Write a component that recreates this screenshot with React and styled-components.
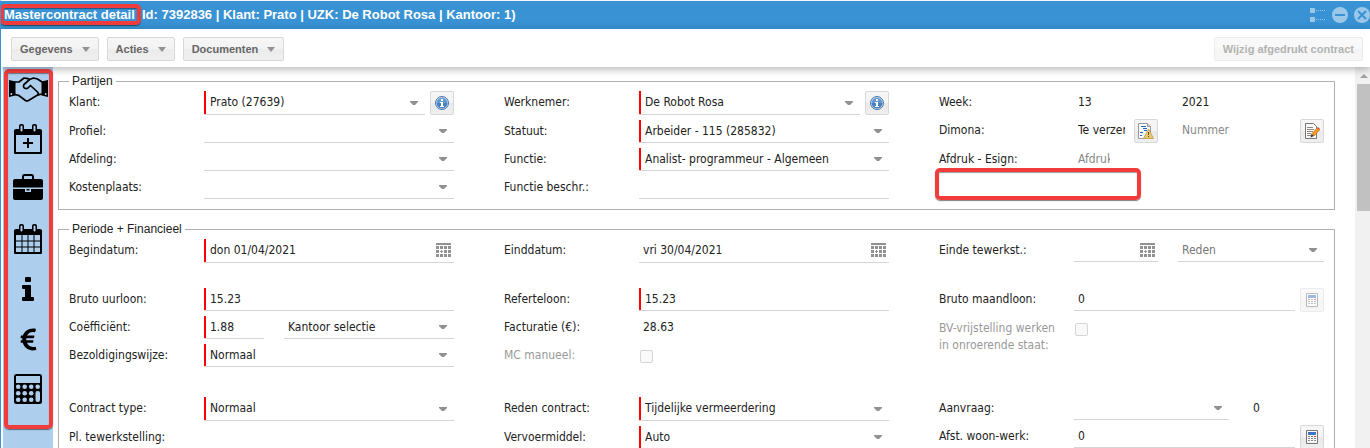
import React, { useId } from "react";
import styled, { createGlobalStyle, css } from "styled-components";
import { FaEuroSign } from "react-icons/fa";

const GlobalStyle = createGlobalStyle`
    * {
        box-sizing: border-box;
    }

    body {
        margin: 0;
        background: #fff;
        color: #222;
        font-family: "DejaVu Sans Condensed", "DejaVu Sans", sans-serif;
        font-size: 12px;
    }

    input, select, button {
        font: inherit;
        color: inherit;
        margin: 0;
    }
`;

const Window = styled.div`
    display: flex;
    flex-direction: column;
    height: 100vh;
    overflow: hidden;
    border-top: 1px solid #f5f5f5;
    border-left: 1px solid #3892d3;
`;

/* Rood kader rond een onderdeel */
const Highlight = styled.span`
    position: absolute;
    inset: ${({ $inset }) => $inset};
    border: 4px solid #f23c3c;
    border-radius: 5px;
    box-shadow: 0 1px 1px rgba(0, 0, 0, 0.5), inset 0 1px 1px rgba(0, 0, 0, 0.4);
    pointer-events: none;
`;

const TitleBar = styled.header`
    display: flex;
    align-items: center;
    justify-content: space-between;
    flex-shrink: 0;
    height: 28px;
    padding-left: 3px;
    background: #3892d3;
`;

const Title = styled.h1`
    margin: 0;
    color: #fff;
    font: bold 13px/16px "Liberation Sans", Arial, sans-serif;
    white-space: pre;
`;

const Marked = styled.span`
    position: relative;
`;

const Tools = styled.div`
    display: flex;
    gap: 6px;
`;

const ToolButton = styled.button`
    display: flex;
    padding: 0;
    border: 0;
    background: none;
`;

const Toolbar = styled.div`
    display: flex;
    align-items: center;
    flex-shrink: 0;
    gap: 8px;
    height: 38px;
    padding: 2px 7px 0 10px;
    background: #fff;
    box-shadow: 0 2px 8px rgba(0, 0, 0, 0.3);
    position: relative;
    z-index: 1;
`;

const MenuButton = styled.button`
    display: flex;
    align-items: center;
    gap: 9px;
    height: 24px;
    padding: 0 8px;
    border: 1px solid #d8d8d8;
    border-radius: 2px;
    background: linear-gradient(#f6f6f6, #f3f3f3 50%, #ececec 50%, #efefef);
    color: #666;
    font: bold 11px/14px "Liberation Sans", Arial, sans-serif;

    &:disabled {
        opacity: 0.5;
    }
`;

const Spacer = styled.div`
    flex: 1;
`;

const Body = styled.div`
    display: flex;
    flex: 1;
    min-height: 0;
`;

const Sidebar = styled.aside`
    flex: 0 0 50px;
    margin-left: 2px;
    background: #adceed;
`;

const SideNav = styled.nav`
    position: relative;
    display: flex;
    flex-direction: column;
    gap: 6px;
    padding-bottom: 18px;
`;

const SideLink = styled.a`
    display: flex;
    align-items: center;
    justify-content: center;
    height: 44px;
    color: #000;
`;

const Content = styled.main`
    display: flex;
    flex-direction: column;
    flex: 1;
    gap: 12px;
    min-width: 0;
    padding: 7px 20px 0 5px;
    overflow: hidden;
`;

const Scrollbar = styled.div`
    flex: 0 0 15px;
    display: flex;
    flex-direction: column;
    align-items: center;
    padding: 7px 0 0 2px;
    gap: 6px;
    background: #f1f1f1;
`;

const Thumb = styled.div`
    width: 100%;
    height: 34%;
    background: #c1c1c1;
`;

const Fieldset = styled.fieldset`
    flex-shrink: 0;
    min-width: 0;
    margin: 0;
    padding: 3px 10px 10px;
    border: 1px solid #b0b0b0;
`;

const Legend = styled.legend`
    padding: 0 3px;
    font: 12px/14px "Liberation Sans", Arial, sans-serif;
`;

const Group = styled.div`
    display: grid;
    grid-template-columns: repeat(3, minmax(0, 1fr));
    column-gap: 50px;
    margin-bottom: ${({ $space = 0 }) => $space}px;
`;

const Column = styled.div`
    display: flex;
    flex-direction: column;
    gap: 5px;
`;

const Row = styled.div`
    position: relative;
    display: grid;
    grid-template-columns: 135px minmax(0, 1fr);
    align-items: start;
    min-height: 23px;
`;

const Label = styled.label`
    line-height: ${({ $multi }) => ($multi ? 17 : 23)}px;
    padding-top: ${({ $multi }) => ($multi ? 3 : 0)}px;
    color: ${({ $muted }) => ($muted ? "#999" : "inherit")};
`;

const Controls = styled.div`
    display: flex;
    align-items: flex-start;
    gap: ${({ $gap = 5 }) => $gap}px;
`;

const Field = styled.div`
    position: relative;
    display: flex;
    flex: ${({ $width }) => ($width ? `0 0 ${$width}px` : "1 1 0")};
    min-width: 0;
    margin-left: ${({ $indent = 0 }) => $indent}px;
`;

const control = css`
    width: 100%;
    height: ${({ $tall }) => ($tall ? 24 : 23)}px;
    padding: 0 4px ${({ $tall }) => ($tall ? 2 : 0)}px;
    border: 0;
    border-bottom: 1px solid ${({ $plain }) => ($plain ? "transparent" : "#d5d5d5")};
    border-radius: 0;
    outline: 0;
    background: transparent;

    ${({ $required }) => $required && css`
        padding-left: 6px;
        box-shadow: inset 2px 0 #f00;
    `}
`;

const Input = styled.input`
    ${control}

    &::placeholder {
        color: #888;
        opacity: 1;
    }
`;

const Select = styled.select`
    ${control}
    appearance: none;
    color: ${({ $muted }) => ($muted ? "#777" : "inherit")};
`;

const Trigger = styled.span`
    position: absolute;
    top: 0;
    bottom: 1px;
    right: ${({ $right = 7 }) => $right}px;
    display: flex;
    align-items: center;
    pointer-events: none;
`;

const Checkbox = styled.input`
    appearance: none;
    width: 13px;
    height: 13px;
    margin: 6px 1px 0;
    border: 1px solid #d5d5d5;
    border-radius: 2px;
    background: #f9f9f9;
`;

const IconButton = styled.button`
    display: flex;
    align-items: center;
    justify-content: center;
    flex: 0 0 24px;
    height: 24px;
    padding: 0;
    border: 1px solid #d8d8d8;
    border-radius: 2px;
    background: linear-gradient(#f6f6f6, #f3f3f3 50%, #e9e9e9 50%, #efefef);

    &:disabled {
        opacity: 0.5;
    }
`;

const Caret = () => (
    <svg width="8" height="4" viewBox="0 0 8 4" fill="#919191">
        <path d="M0 0h8v1L5 4H3L0 1z" />
    </svg>
);

const MenuCaret = () => (
    <svg width="8" height="5" viewBox="0 0 8 5" fill="#929292">
        <path d="M0 0h8L4 5z" />
    </svg>
);

const ScrollArrow = () => (
    <svg width="8" height="4" viewBox="0 0 8 4" fill="#a3a3a3">
        <path d="M4 0l4 4H0z" />
    </svg>
);

const DateIcon = () => (
    <svg width="15" height="15" viewBox="0 0 15 15" fill="#919191" shapeRendering="crispEdges">
        <path d="M0 0h15v2H0zM0 3h3v3H0zM4 3h3v3H4zM8 3h3v3H8zM12 3h3v3h-3zM0 7h3v3H0zM5 7h1v1h1v1H6v1H5V9H4V8h1zM8 7h3v3H8zM12 7h3v3h-3zM0 11h3v3H0zM4 11h3v3H4zM8 11h3v3H8zM12 11h3v3h-3z" />
    </svg>
);

const InfoBadge = () => (
    <svg width="14" height="14" viewBox="0 0 14 14">
        <circle cx="7" cy="7" r="6.5" fill="#c3d8ef" stroke="#4a77ad" />
        <circle cx="7" cy="7" r="5.3" fill="#6499d0" />
        <path d="M1.7 7a5.3 5.3 0 0 0 10.6 0z" fill="#4a80bd" />
        <path d="M6 3h2v2H6zM5 6h3v4h1v1H5v-1h1V7H5z" fill="#fff" />
    </svg>
);

const WarningDocIcon = () => (
    <svg width="16" height="16" viewBox="0 0 16 16">
        <path d="M.5.5h9l3 3v12H.5z" fill="#fafafa" stroke="#999" />
        <path d="M9.5.5v3h3" fill="#ddd" stroke="#999" />
        <path d="M3 3.5h5M5 5.500h4M6 7.500h3M2 9.500h3M2 12.500h2" stroke="#1a66d0" />
        <path d="M10.500 6l5 9.500h-10z" fill="#e3c878" stroke="#c9a654" />
        <path d="M10 9h1v3h-1zM10 13h1v1h-1z" fill="#6b4d12" />
    </svg>
);

const EditDocIcon = () => (
    <svg width="16" height="16" viewBox="0 0 16 16">
        <path d="M1.500.5h8l3 3v12h-11z" fill="#fafafa" stroke="#777" />
        <path d="M3 4.500h6M3 6.500h7M3 8.500h6M3 10.500h4M3 12.500h4" stroke="#888" />
        <path d="M13 5l2.500 2-5.500 6-2.500-2z" fill="#f59a23" stroke="#c8660a" strokeWidth=".6" />
        <path d="M13 5l1-1 2 2-.5 1z" fill="#d9482b" />
        <path d="M7.500 11l2.500 2-3.500 1.500z" fill="#333" />
    </svg>
);

const SmallCalcIcon = () => (
    <svg width="12" height="14" viewBox="0 0 12 14">
        <path d="M.5.5h11v13H.5z" fill="#fafafa" stroke="#777" />
        <path d="M2 2h8v3H2z" fill="#3e74c4" />
        <path d="M2 6h2v1H2zM5 6h2v1H5zM2 8h2v1H2zM5 8h2v1H5zM8 8h2v1H8zM2 10h2v1H2zM5 10h2v1H5zM8 10h2v1H8z" fill="#888" />
        <path d="M8 6h2v1H8z" fill="#e33" />
    </svg>
);

const HandshakeIcon = () => (
    <svg width="39" height="25" viewBox="0 0 39 25">
        <path d="M0 3l6.500 1.500v14L0 20zM39 3l-6.500 1.500v14L39 20z" />
        <circle cx="2.300" cy="17" r="1" fill="#adceed" />
        <circle cx="36.700" cy="17" r="1" fill="#adceed" />
        <g fill="none" stroke="#000" strokeWidth="1.700" strokeLinejoin="round" strokeLinecap="round">
            <path d="M6 5h4l5-4 4 .7 1.500.8L24.500 1l4 1L33 5" />
            <path d="M6 17.500l3.500.8 7 5.200q1.500.8 3 0l9.500-5.700 4-.8" />
            <path d="M20.500 2.500l-5.500 5q-1.500 3 1.500 4 2 .3 3.500-1.500l1.500-1.500 7 6.500q1.500 2 .5 3" />
        </g>
    </svg>
);

const CalendarIcon = ({ plus }) => (
    <svg width="28" height="30" viewBox="0 0 28 30">
        <path d="M1 7h26v22H1z" fill="none" stroke="#000" strokeWidth="2" strokeLinejoin="round" />
        <path d="M0 7q0-2 2-2h24q2 0 2 2v4H0z" />
        <rect x="5" width="5" height="9" rx="2" />
        <rect x="18" width="5" height="9" rx="2" />
        <path d="M7.500 2.500v4M20.500 2.500v4" stroke="#adceed" strokeWidth="2" strokeLinecap="round" />
        {plus
            ? <path d="M14 14v10M9 19h10" stroke="#000" strokeWidth="2" />
            : <path d="M8 11v18M14 11v18M20 11v18M1 17h26M1 23h26" stroke="#000" />}
    </svg>
);

const BriefcaseIcon = () => (
    <svg width="30" height="30" viewBox="0 0 30 30">
        <path d="M10 6V2.500Q10 1 11.500 1h7Q20 1 20 2.500V6" fill="none" stroke="#000" strokeWidth="2" />
        <path d="M2 5h26q2 0 2 2v6.500H0V7q0-2 2-2zM0 15h12v3h6v-3h12v9q0 2-2 2H2q-2 0-2-2zM13.500 15h3v1.500h-3z" />
    </svg>
);

const InfoIcon = () => (
    <svg width="12" height="24" viewBox="0 0 12 24">
        <path d="M4 0h4q1 0 1 1v3q0 1-1 1H4q-1 0-1-1V1q0-1 1-1zM1 8h7q1 0 1 1v11h2q1 0 1 1v2q0 1-1 1H1q-1 0-1-1v-2q0-1 1-1h2v-8H1q-1 0-1-1V9q0-1 1-1z" />
    </svg>
);

const CalculatorIcon = () => (
    <svg width="28" height="30" viewBox="0 0 28 30">
        <rect width="28" height="30" rx="2.500" />
        <path d="M2 2h24v7H2z" fill="#adceed" />
        <g fill="#adceed">
            {[12.800, 19.300, 25.800].map((y) => [4.200, 10.700, 17.200].map((x) => (
                <circle key={`${x}-${y}`} cx={x} cy={y} r="2.300" />
            )))}
            <circle cx="23.700" cy="12.800" r="2.300" />
            <rect x="21.500" y="17" width="4.500" height="11" rx="2" />
        </g>
    </svg>
);

const ListIcon = () => (
    <svg width="16" height="16" viewBox="0 0 16 16" fill="#9bc8e9">
        <path d="M0 1h5v5H0zM0 10h5v5H0z" />
        <path d="M6 3.500h10M6 12.500h10" stroke="#9bc8e9" strokeDasharray="1 1" />
    </svg>
);

const CircleIcon = ({ d }) => (
    <svg width="16" height="16" viewBox="0 0 16 16">
        <circle cx="8" cy="8" r="8" fill="#9bc8e9" />
        <path d={d} stroke="#3892d3" strokeWidth="2" />
    </svg>
);

function TextField({ width, indent, date, ...props }) {
    return (
        <Field $width={width} $indent={indent}>
            <Input {...props} />
            {date && <Trigger $right={3}><DateIcon /></Trigger>}
        </Field>
    );
}

function SelectField({ width, value = "", ...props }) {
    return (
        <Field $width={width}>
            <Select defaultValue={value} {...props}>
                <option>{value}</option>
            </Select>
            <Trigger><Caret /></Trigger>
        </Field>
    );
}

function FormRow({ label, muted, multi, gap, highlight, children }) {
    const id = useId();
    const [first, ...rest] = React.Children.toArray(children);
    return (
        <Row>
            <Label htmlFor={id} $muted={muted} $multi={multi}>{label}</Label>
            <Controls $gap={gap}>
                {React.cloneElement(first, { id })}
                {rest}
            </Controls>
            {highlight && <Highlight $inset="20px 183px -29px -4px" />}
        </Row>
    );
}

function Partijen() {
    return (
        <Fieldset>
            <Legend>Partijen</Legend>
            <Group>
                <Column>
                    <FormRow label="Klant:">
                        <SelectField value="Prato (27639)" $required $tall />
                        <IconButton aria-label="Info klant"><InfoBadge /></IconButton>
                    </FormRow>
                    <FormRow label="Profiel:"><SelectField /></FormRow>
                    <FormRow label="Afdeling:"><SelectField /></FormRow>
                    <FormRow label="Kostenplaats:"><SelectField /></FormRow>
                </Column>
                <Column>
                    <FormRow label="Werknemer:">
                        <SelectField value="De Robot Rosa" $required $tall />
                        <IconButton aria-label="Info werknemer"><InfoBadge /></IconButton>
                    </FormRow>
                    <FormRow label="Statuut:"><SelectField value="Arbeider - 115 (285832)" $required /></FormRow>
                    <FormRow label="Functie:"><SelectField value="Analist- programmeur - Algemeen" $required /></FormRow>
                    <FormRow label="Functie beschr.:"><TextField /></FormRow>
                </Column>
                <Column>
                    <FormRow label="Week:" gap={20}>
                        <TextField width={84} defaultValue="13" $plain />
                        <TextField defaultValue="2021" aria-label="Jaar" $plain />
                    </FormRow>
                    <FormRow label="Dimona:">
                        <TextField width={55} defaultValue="Te verzenden" $plain />
                        <IconButton aria-label="Dimona status"><WarningDocIcon /></IconButton>
                        <TextField indent={15} placeholder="Nummer" aria-label="Nummer" $plain />
                        <IconButton aria-label="Dimona bewerken"><EditDocIcon /></IconButton>
                    </FormRow>
                    <FormRow label="Afdruk - Esign:" highlight>
                        <TextField width={40} placeholder="Afdruk" $plain />
                    </FormRow>
                </Column>
            </Group>
        </Fieldset>
    );
}

function Periode() {
    return (
        <Fieldset>
            <Legend>Periode + Financieel</Legend>
            <Group $space={25}>
                <Column>
                    <FormRow label="Begindatum:">
                        <TextField date defaultValue="don 01/04/2021" $required $tall />
                    </FormRow>
                </Column>
                <Column>
                    <FormRow label="Einddatum:">
                        <TextField date defaultValue="vri 30/04/2021" $tall />
                    </FormRow>
                </Column>
                <Column>
                    <FormRow label="Einde tewerkst.:" gap={20}>
                        <TextField date width={84} />
                        <SelectField value="Reden" aria-label="Reden" $muted />
                    </FormRow>
                </Column>
            </Group>
            <Group $space={30}>
                <Column>
                    <FormRow label="Bruto uurloon:"><TextField defaultValue="15.23" $required /></FormRow>
                    <FormRow label="Coëfficiënt:" gap={20}>
                        <TextField width={60} defaultValue="1.88" $required />
                        <SelectField value="Kantoor selectie" aria-label="Selectie" />
                    </FormRow>
                    <FormRow label="Bezoldigingswijze:"><SelectField value="Normaal" $required /></FormRow>
                </Column>
                <Column>
                    <FormRow label="Referteloon:"><TextField defaultValue="15.23" $required /></FormRow>
                    <FormRow label="Facturatie (€):"><TextField defaultValue="28.63" $plain /></FormRow>
                    <FormRow label="MC manueel:" muted><Checkbox type="checkbox" disabled /></FormRow>
                </Column>
                <Column>
                    <FormRow label="Bruto maandloon:">
                        <TextField defaultValue="0" />
                        <IconButton aria-label="Bereken maandloon" disabled><SmallCalcIcon /></IconButton>
                    </FormRow>
                    <FormRow label={<>BV-vrijstelling werken<br />in onroerende staat:</>} muted multi>
                        <Checkbox type="checkbox" disabled />
                    </FormRow>
                </Column>
            </Group>
            <Group>
                <Column>
                    <FormRow label="Contract type:"><SelectField value="Normaal" $required $tall /></FormRow>
                    <FormRow label="Pl. tewerkstelling:"><TextField $plain /></FormRow>
                </Column>
                <Column>
                    <FormRow label="Reden contract:">
                        <SelectField value="Tijdelijke vermeerdering" $required $tall />
                    </FormRow>
                    <FormRow label="Vervoermiddel:"><SelectField value="Auto" $required /></FormRow>
                </Column>
                <Column>
                    <FormRow label="Aanvraag:" gap={20}>
                        <SelectField width={155} />
                        <TextField defaultValue="0" aria-label="Aantal" $plain />
                    </FormRow>
                    <FormRow label="Afst. woon-werk:">
                        <TextField defaultValue="0" />
                        <IconButton aria-label="Bereken afstand"><SmallCalcIcon /></IconButton>
                    </FormRow>
                </Column>
            </Group>
        </Fieldset>
    );
}

const sideItems = [
    { name: "Partijen", icon: <HandshakeIcon /> },
    { name: "Periode", icon: <CalendarIcon plus /> },
    { name: "Werk", icon: <BriefcaseIcon /> },
    { name: "Kalender", icon: <CalendarIcon /> },
    { name: "Info", icon: <InfoIcon /> },
    { name: "Financieel", icon: <FaEuroSign size={25} /> },
    { name: "Berekening", icon: <CalculatorIcon /> },
];

function App() {
    return (
        <Window>
            <GlobalStyle />
            <TitleBar>
                <Title>
                    <Marked>
                        Mastercontract detail
                        <Highlight $inset="-3px -6px -3px -4px" />
                    </Marked>
                    {"  Id: 7392836 | Klant: Prato | UZK: De Robot Rosa | Kantoor: 1)"}
                </Title>
                <Tools>
                    <ToolButton aria-label="Lijst"><ListIcon /></ToolButton>
                    <ToolButton aria-label="Minimaliseren"><CircleIcon d="M3 8h10" /></ToolButton>
                    <ToolButton aria-label="Sluiten"><CircleIcon d="M4 4l8 8M12 4l-8 8" /></ToolButton>
                </Tools>
            </TitleBar>
            <Toolbar>
                <MenuButton>Gegevens <MenuCaret /></MenuButton>
                <MenuButton>Acties <MenuCaret /></MenuButton>
                <MenuButton>Documenten <MenuCaret /></MenuButton>
                <Spacer />
                <MenuButton disabled>Wijzig afgedrukt contract</MenuButton>
            </Toolbar>
            <Body>
                <Sidebar>
                    <SideNav>
                        {sideItems.map(({ name, icon }) => (
                            <SideLink key={name} href={`#${name}`} aria-label={name}>{icon}</SideLink>
                        ))}
                        <Highlight $inset="2px 0 0 1px" />
                    </SideNav>
                </Sidebar>
                <Content>
                    <Partijen />
                    <Periode />
                </Content>
                <Scrollbar>
                    <ScrollArrow />
                    <Thumb />
                </Scrollbar>
            </Body>
        </Window>
    );
}

export default App;
